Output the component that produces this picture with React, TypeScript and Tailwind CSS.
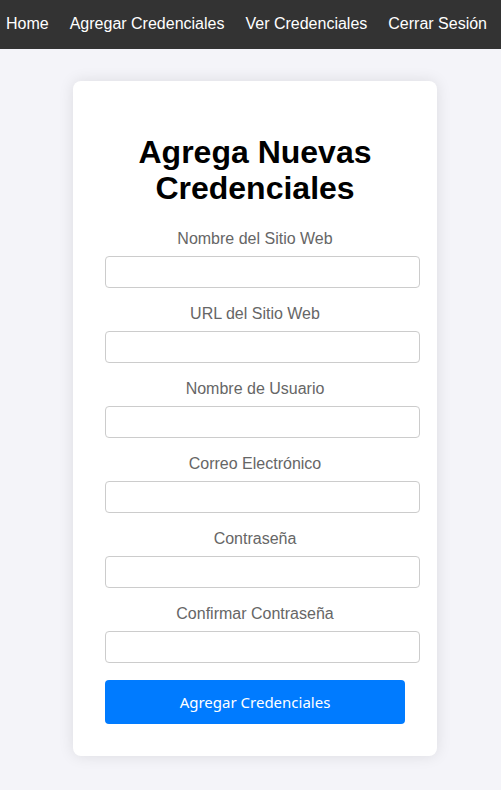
const links = ["Home", "Agregar Credenciales", "Ver Credenciales", "Cerrar Sesión"];

const fields = [
  { id: "sitio", label: "Nombre del Sitio Web", type: "text" },
  { id: "url", label: "URL del Sitio Web", type: "url" },
  { id: "usuario", label: "Nombre de Usuario", type: "text" },
  { id: "correo", label: "Correo Electrónico", type: "email" },
  { id: "contrasena", label: "Contraseña", type: "password" },
  { id: "confirmar", label: "Confirmar Contraseña", type: "password" },
];

export default function App() {
  return (
    <div className="min-h-screen bg-[#f4f4f9] font-['Liberation_Sans',Arial,sans-serif] text-base">
      <nav className="flex h-[49px] items-center justify-center gap-[21px] bg-[#333333] pr-2 pb-px whitespace-nowrap text-white">
        {links.map((link) => (
          <a key={link} href="#">
            {link}
          </a>
        ))}
      </nav>
      <main className="flex justify-center py-8 pr-4 pl-[25px]">
        <form
          className="w-full max-w-[364px] rounded-lg bg-white p-8 text-center shadow-[0_0_15px_rgba(0,0,0,0.1)]"
          onSubmit={(e) => e.preventDefault()}
        >
          <h1 className="mt-[21px] mb-[23px] text-[32px] leading-9 font-bold text-black">
            Agrega Nuevas Credenciales
          </h1>
          <div className="mb-[17px] flex flex-col gap-4">
            {fields.map((field) => (
              <div key={field.id}>
                <label htmlFor={field.id} className="mb-2 block leading-[19px] text-[#666666]">
                  {field.label}
                </label>
                <input
                  id={field.id}
                  type={field.type}
                  className="block h-8 w-[calc(100%+15px)] rounded border border-[#cccccc] bg-white px-2"
                />
              </div>
            ))}
          </div>
          <button
            type="submit"
            className="block h-11 w-full rounded bg-[#007bff] font-['Noto_Sans',sans-serif] text-[15px] text-white"
          >
            Agregar Credenciales
          </button>
        </form>
      </main>
    </div>
  );
}
